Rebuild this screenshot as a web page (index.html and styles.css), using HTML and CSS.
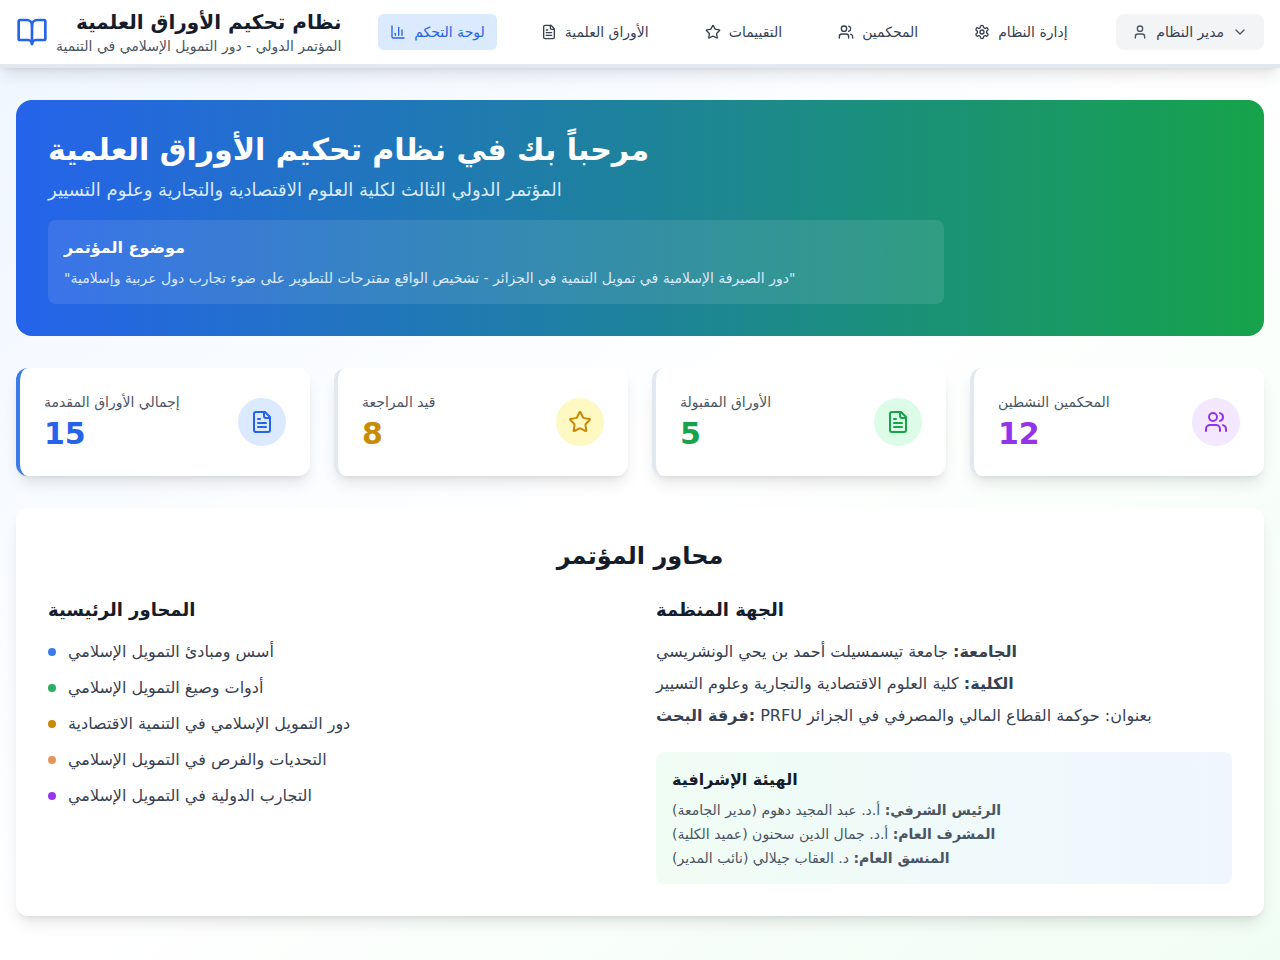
FILE: index.html
```html
<!DOCTYPE html>
<html lang="ar" dir="ltr">
<head>
<meta charset="utf-8">
<meta name="viewport" content="width=device-width, initial-scale=1">
<title>نظام تحكيم الأوراق العلمية</title>
<link rel="stylesheet" href="styles.css">
</head>
<body>
<svg class="sprite" aria-hidden="true">
  <symbol id="book" viewBox="0 0 24 24"><path d="M12 7v14"/><path d="M3 18a1 1 0 0 1-1-1V4a1 1 0 0 1 1-1h5a4 4 0 0 1 4 4 4 4 0 0 1 4-4h5a1 1 0 0 1 1 1v13a1 1 0 0 1-1 1h-6a3 3 0 0 0-3 3 3 3 0 0 0-3-3z"/></symbol>
  <symbol id="chart" viewBox="0 0 24 24"><path d="M3 3v16a2 2 0 0 0 2 2h16"/><path d="M18 17V9"/><path d="M13 17V5"/><path d="M8 17v-3"/></symbol>
  <symbol id="file" viewBox="0 0 24 24"><path d="M15 2H6a2 2 0 0 0-2 2v16a2 2 0 0 0 2 2h12a2 2 0 0 0 2-2V7Z"/><path d="M14 2v4a2 2 0 0 0 2 2h4"/><path d="M10 9H8"/><path d="M16 13H8"/><path d="M16 17H8"/></symbol>
  <symbol id="star" viewBox="0 0 24 24"><path d="M11.525 2.295a.53.53 0 0 1 .95 0l2.31 4.679a2.123 2.123 0 0 0 1.595 1.16l5.166.756a.53.53 0 0 1 .294.904l-3.736 3.638a2.123 2.123 0 0 0-.611 1.878l.882 5.14a.53.53 0 0 1-.771.56l-4.618-2.428a2.122 2.122 0 0 0-1.973 0L6.396 21.01a.53.53 0 0 1-.77-.56l.881-5.139a2.122 2.122 0 0 0-.611-1.879L2.16 9.795a.53.53 0 0 1 .294-.906l5.165-.755a2.122 2.122 0 0 0 1.597-1.16z"/></symbol>
  <symbol id="users" viewBox="0 0 24 24"><path d="M16 21v-2a4 4 0 0 0-4-4H6a4 4 0 0 0-4 4v2"/><circle cx="9" cy="7" r="4"/><path d="M22 21v-2a4 4 0 0 0-3-3.87"/><path d="M16 3.13a4 4 0 0 1 0 7.75"/></symbol>
  <symbol id="settings" viewBox="0 0 24 24"><path d="M12.22 2h-.44a2 2 0 0 0-2 2v.18a2 2 0 0 1-1 1.73l-.43.25a2 2 0 0 1-2 0l-.15-.08a2 2 0 0 0-2.73.73l-.22.38a2 2 0 0 0 .73 2.73l.15.1a2 2 0 0 1 1 1.72v.51a2 2 0 0 1-1 1.74l-.15.09a2 2 0 0 0-.73 2.73l.22.38a2 2 0 0 0 2.73.73l.15-.08a2 2 0 0 1 2 0l.43.25a2 2 0 0 1 1 1.73V20a2 2 0 0 0 2 2h.44a2 2 0 0 0 2-2v-.18a2 2 0 0 1 1-1.73l.43-.25a2 2 0 0 1 2 0l.15.08a2 2 0 0 0 2.73-.73l.22-.39a2 2 0 0 0-.73-2.73l-.15-.08a2 2 0 0 1-1-1.74v-.5a2 2 0 0 1 1-1.74l.15-.09a2 2 0 0 0 .73-2.73l-.22-.38a2 2 0 0 0-2.73-.73l-.15.08a2 2 0 0 1-2 0l-.43-.25a2 2 0 0 1-1-1.73V4a2 2 0 0 0-2-2z"/><circle cx="12" cy="12" r="3"/></symbol>
  <symbol id="user" viewBox="0 0 24 24"><path d="M19 21v-2a4 4 0 0 0-4-4H9a4 4 0 0 0-4 4v2"/><circle cx="12" cy="7" r="4"/></symbol>
  <symbol id="chevron" viewBox="0 0 24 24"><path d="m6 9 6 6 6-6"/></symbol>
</svg>

<header class="topbar">
  <div class="brand">
    <svg class="icon icon-lg" aria-hidden="true"><use href="#book"/></svg>
    <div class="brand-text">
      <h1 class="brand-title">نظام تحكيم الأوراق العلمية</h1>
      <p class="brand-sub">المؤتمر الدولي - دور التمويل الإسلامي في التنمية</p>
    </div>
  </div>
  <nav class="nav">
    <a class="nav-link active" href="#dashboard" aria-current="page"><svg class="icon" aria-hidden="true"><use href="#chart"/></svg>لوحة التحكم</a>
    <a class="nav-link" href="#papers"><svg class="icon" aria-hidden="true"><use href="#file"/></svg>الأوراق العلمية</a>
    <a class="nav-link" href="#reviews"><svg class="icon" aria-hidden="true"><use href="#star"/></svg>التقييمات</a>
    <a class="nav-link" href="#reviewers"><svg class="icon" aria-hidden="true"><use href="#users"/></svg>المحكمين</a>
    <a class="nav-link" href="#admin"><svg class="icon" aria-hidden="true"><use href="#settings"/></svg>إدارة النظام</a>
  </nav>
  <button class="account" type="button" aria-haspopup="menu"><svg class="icon" aria-hidden="true"><use href="#user"/></svg><span>مدير النظام</span><svg class="icon" aria-hidden="true"><use href="#chevron"/></svg></button>
</header>

<main class="page">
  <section class="hero">
    <h2 class="hero-title">مرحباً بك في نظام تحكيم الأوراق العلمية</h2>
    <p class="hero-sub">المؤتمر الدولي الثالث لكلية العلوم الاقتصادية والتجارية وعلوم التسيير</p>
    <div class="topic">
      <h3 class="topic-title">موضوع المؤتمر</h3>
      <p class="topic-text">"دور الصيرفة الإسلامية في تمويل التنمية في الجزائر - تشخيص الواقع مقترحات للتطوير على ضوء تجارب دول عربية وإسلامية"</p>
    </div>
  </section>

  <section class="stats">
    <article class="stat blue highlighted">
      <div><p class="stat-label">إجمالي الأوراق المقدمة</p><p class="stat-value">15</p></div>
      <span class="stat-icon"><svg class="icon icon-md" aria-hidden="true"><use href="#file"/></svg></span>
    </article>
    <article class="stat yellow">
      <div><p class="stat-label">قيد المراجعة</p><p class="stat-value">8</p></div>
      <span class="stat-icon"><svg class="icon icon-md" aria-hidden="true"><use href="#star"/></svg></span>
    </article>
    <article class="stat green">
      <div><p class="stat-label">الأوراق المقبولة</p><p class="stat-value">5</p></div>
      <span class="stat-icon"><svg class="icon icon-md" aria-hidden="true"><use href="#file"/></svg></span>
    </article>
    <article class="stat purple">
      <div><p class="stat-label">المحكمين النشطين</p><p class="stat-value">12</p></div>
      <span class="stat-icon"><svg class="icon icon-md" aria-hidden="true"><use href="#users"/></svg></span>
    </article>
  </section>

  <section class="panel">
    <h2 class="panel-title">محاور المؤتمر</h2>
    <div class="columns">
      <div>
        <h3 class="col-title">المحاور الرئيسية</h3>
        <ul class="topics">
          <li class="dot-blue">أسس ومبادئ التمويل الإسلامي</li>
          <li class="dot-green">أدوات وصيغ التمويل الإسلامي</li>
          <li class="dot-yellow">دور التمويل الإسلامي في التنمية الاقتصادية</li>
          <li class="dot-orange">التحديات والفرص في التمويل الإسلامي</li>
          <li class="dot-purple">التجارب الدولية في التمويل الإسلامي</li>
        </ul>
      </div>
      <div>
        <h3 class="col-title">الجهة المنظمة</h3>
        <div class="facts">
          <p><strong>الجامعة:</strong> جامعة تيسمسيلت أحمد بن يحي الونشريسي</p>
          <p><strong>الكلية:</strong> كلية العلوم الاقتصادية والتجارية وعلوم التسيير</p>
          <p><strong>فرقة البحث:</strong> PRFU بعنوان: حوكمة القطاع المالي والمصرفي في الجزائر</p>
        </div>
        <div class="board">
          <h4 class="board-title">الهيئة الإشرافية</h4>
          <div class="board-list">
            <p><strong>الرئيس الشرفي:</strong> أ.د. عبد المجيد دهوم (مدير الجامعة)</p>
            <p><strong>المشرف العام:</strong> أ.د. جمال الدين سحنون (عميد الكلية)</p>
            <p><strong>المنسق العام:</strong> د. العقاب جيلالي (نائب المدير)</p>
          </div>
        </div>
      </div>
    </div>
  </section>
</main>
</body>
</html>
```
FILE: styles.css
```css
*, *::before { box-sizing: border-box; }
h1, h2, h3, h4, p, ul { margin: 0; padding: 0; }

body {
  margin: 0;
  min-height: 100vh;
  font-family: "DejaVu Sans", sans-serif;
  font-size: 16px;
  line-height: 24px;
  color: #151c2b;
  background: linear-gradient(to bottom right, #eff6ff, #ffffff, #f0fdf4);
}

.sprite { display: none; }
.icon {
  width: 16px;
  height: 16px;
  flex-shrink: 0;
  fill: none;
  stroke: currentColor;
  stroke-width: 2;
  stroke-linecap: round;
  stroke-linejoin: round;
}
.icon-md { width: 24px; height: 24px; }
.icon-lg { width: 32px; height: 32px; color: #2563eb; }

/* Top bar */
.topbar {
  display: flex;
  align-items: center;
  justify-content: space-between;
  padding: 8px 16px;
  background: #ffffff;
  border-bottom: 4px solid #e2e8f0;
  box-shadow: 0 10px 15px -3px rgb(0 0 0 / 0.1), 0 4px 6px -4px rgb(0 0 0 / 0.1);
}
.brand { display: flex; align-items: center; gap: 8px; }
.brand-text { text-align: right; }
.brand-title { font-size: 20px; line-height: 28px; }
.brand-sub { font-size: 14px; line-height: 20px; color: #4b5563; }

.nav { display: flex; gap: 32px; }
.nav-link {
  display: flex;
  align-items: center;
  gap: 8px;
  padding: 8px 12px;
  border-radius: 6px;
  font-size: 14px;
  line-height: 20px;
  color: #374151;
  text-decoration: none;
  white-space: nowrap;
}
.nav-link.active { color: #2563eb; background: #dbeafe; }

.account {
  display: flex;
  align-items: center;
  gap: 8px;
  padding: 8px 16px;
  border: 0;
  border-radius: 8px;
  font: inherit;
  font-size: 14px;
  line-height: 20px;
  color: #374151;
  background: #f3f4f6;
  cursor: pointer;
}
.account .icon { color: #4b5563; }

/* Page */
.page {
  display: flex;
  flex-direction: column;
  gap: 32px;
  padding: 32px 16px;
}

.hero {
  padding: 32px;
  border-radius: 16px;
  color: #ffffff;
  background: linear-gradient(to right, #2563eb, #16a34a);
}
.hero-title { margin-bottom: 8px; font-size: 30px; line-height: 36px; }
.hero-sub { margin-bottom: 16px; font-size: 18px; line-height: 28px; color: #dbeafe; }
.topic {
  max-width: 896px;
  padding: 16px;
  border-radius: 8px;
  background: rgb(255 255 255 / 0.1);
}
.topic-title { margin-bottom: 8px; font-size: 16px; line-height: 24px; }
.topic-text { font-size: 14px; line-height: 20px; color: #dbeafe; }

/* Statistics */
.stats { display: grid; grid-template-columns: repeat(4, 1fr); gap: 24px; }
.stat {
  display: flex;
  align-items: center;
  justify-content: space-between;
  padding: 24px;
  border-left: 4px solid #e2e8f0;
  border-radius: 12px;
  background: #ffffff;
  box-shadow: 0 10px 15px -3px rgb(0 0 0 / 0.1), 0 4px 6px -4px rgb(0 0 0 / 0.1);
}
.stat.highlighted { border-left-color: #3b7be8; }
.stat-label { margin-bottom: 4px; font-size: 14px; line-height: 20px; color: #4b5563; }
.stat-value { font-size: 30px; line-height: 36px; font-weight: 700; }
.stat-icon { display: flex; padding: 12px; border-radius: 50%; }
.blue .stat-value, .blue .stat-icon { color: #2563eb; }
.yellow .stat-value, .yellow .stat-icon { color: #ca8a04; }
.green .stat-value, .green .stat-icon { color: #16a34a; }
.purple .stat-value, .purple .stat-icon { color: #9333ea; }
.blue .stat-icon { background: #dbeafe; }
.yellow .stat-icon { background: #fef9c3; }
.green .stat-icon { background: #dcfce7; }
.purple .stat-icon { background: #f3e8ff; }

/* Conference details */
.panel {
  padding: 32px;
  border-radius: 12px;
  background: #ffffff;
  box-shadow: 0 10px 15px -3px rgb(0 0 0 / 0.1), 0 4px 6px -4px rgb(0 0 0 / 0.1);
}
.panel-title { margin-bottom: 24px; font-size: 24px; line-height: 32px; text-align: center; }
.columns { display: grid; grid-template-columns: 1fr 1fr; gap: 32px; }
.col-title { margin-bottom: 16px; font-size: 18px; line-height: 28px; }

.topics { display: flex; flex-direction: column; gap: 12px; list-style: none; color: #374151; }
.topics li { display: flex; align-items: center; gap: 12px; }
.topics li::before {
  content: "";
  width: 8px;
  height: 8px;
  border-radius: 50%;
  background: currentColor;
}
.topics .dot-blue::before { background: #3b7be8; }
.topics .dot-green::before { background: #27b060; }
.topics .dot-yellow::before { background: #ca8a04; }
.topics .dot-orange::before { background: #e8955a; }
.topics .dot-purple::before { background: #9739ea; }

.facts { display: flex; flex-direction: column; gap: 8px; color: #374151; }
.board {
  margin-top: 24px;
  padding: 16px;
  border-radius: 8px;
  background: linear-gradient(to right, #f0fdf4, #eff6ff);
}
.board-title { margin-bottom: 8px; font-size: 16px; line-height: 24px; }
.board-list {
  display: flex;
  flex-direction: column;
  gap: 4px;
  font-size: 14px;
  line-height: 20px;
  color: #4b5563;
}
```
